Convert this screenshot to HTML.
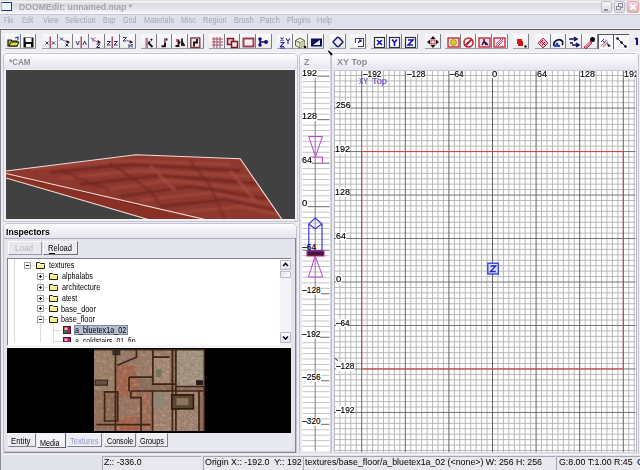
<!DOCTYPE html><html><head><meta charset="utf-8"><style>html,body{margin:0;padding:0;}body{width:640px;height:470px;overflow:hidden;position:relative;background:#e6e6ee;font-family:"Liberation Sans", sans-serif;}div{box-sizing:border-box;}svg{display:block;}</style></head><body>
<div style="position:absolute;left:0px;top:0px;width:640px;height:14px;background:linear-gradient(#d4d4da 0px,#f4f4f8 1.5px,#d8d8de 4px,#e2e2e8 8px,#f2f2f8 13px,#ffffff 14px);"></div>
<div style="position:absolute;left:1.3px;top:2px;width:10.7px;height:9px;background:#eef4fc;border:1px solid #a8b8d0;border-top:1.6px solid #1c3c78;border-bottom:1.2px solid #283c68;border-right:1.2px solid #303c60;"></div>
<div style="position:absolute;left:18.74px;top:2.46px;font-size:9.7px;line-height:9.7px;color:#a4a4ac;font-weight:bold;white-space:pre;transform:scaleX(0.8944);transform-origin:0 0;">DOOMEdit: unnamed.map *</div>
<div style="position:absolute;left:601px;top:1px;width:11px;height:12px;background:linear-gradient(#f4f4f8,#d8d8e2);border:1px solid #c0c0cc;border-radius:2px;"></div>
<div style="position:absolute;left:604px;top:9px;width:4px;height:2px;background:#9090a0;"></div>
<div style="position:absolute;left:614px;top:1px;width:11px;height:12px;background:linear-gradient(#f4f4f8,#d8d8e2);border:1px solid #c0c0cc;border-radius:2px;"></div>
<div style="position:absolute;left:618px;top:3px;width:5px;height:4.5px;border:1px solid #8a8a9a;border-top-width:1.5px;"></div>
<div style="position:absolute;left:616px;top:5.5px;width:5px;height:4.5px;background:#eeeef4;border:1px solid #8a8a9a;border-top-width:1.5px;"></div>
<div style="position:absolute;left:627px;top:1px;width:12px;height:12px;background:linear-gradient(#f4d4d8,#e0b0b8);border:1px solid #d8b0b8;border-radius:2px;"></div>
<svg style="position:absolute;left:627px;top:1px" width="12" height="12"><path d="M3.5 3.5L8.5 8.5M8.5 3.5L3.5 8.5" stroke="#fff" stroke-width="2"/></svg>
<div style="position:absolute;left:0px;top:14px;width:640px;height:1px;background:#c8c8d2;"></div>
<div style="position:absolute;left:0px;top:15px;width:640px;height:13px;background:#dfe0ec;"></div>
<div style="position:absolute;left:0px;top:28px;width:640px;height:1px;background:#eeeef4;"></div>
<div style="position:absolute;left:3.52px;top:16.20px;font-size:8.8px;line-height:8.8px;color:#a4a4b0;font-weight:normal;white-space:pre;transform:scaleX(0.6864);transform-origin:0 0;">File</div>
<div style="position:absolute;left:22.09px;top:16.20px;font-size:8.8px;line-height:8.8px;color:#a4a4b0;font-weight:normal;white-space:pre;transform:scaleX(0.7206);transform-origin:0 0;">Edit</div>
<div style="position:absolute;left:42.50px;top:16.20px;font-size:8.8px;line-height:8.8px;color:#a4a4b0;font-weight:normal;white-space:pre;transform:scaleX(0.8192);transform-origin:0 0;">View</div>
<div style="position:absolute;left:64.66px;top:16.20px;font-size:8.8px;line-height:8.8px;color:#a4a4b0;font-weight:normal;white-space:pre;transform:scaleX(0.8501);transform-origin:0 0;">Selection</div>
<div style="position:absolute;left:103.14px;top:16.20px;font-size:8.8px;line-height:8.8px;color:#a4a4b0;font-weight:normal;white-space:pre;transform:scaleX(0.8026);transform-origin:0 0;">Bsp</div>
<div style="position:absolute;left:123.34px;top:16.20px;font-size:8.8px;line-height:8.8px;color:#a4a4b0;font-weight:normal;white-space:pre;transform:scaleX(0.8108);transform-origin:0 0;">Grid</div>
<div style="position:absolute;left:144.11px;top:16.20px;font-size:8.8px;line-height:8.8px;color:#a4a4b0;font-weight:normal;white-space:pre;transform:scaleX(0.8364);transform-origin:0 0;">Materials</div>
<div style="position:absolute;left:181.03px;top:16.20px;font-size:8.8px;line-height:8.8px;color:#a4a4b0;font-weight:normal;white-space:pre;transform:scaleX(0.8159);transform-origin:0 0;">Misc</div>
<div style="position:absolute;left:202.80px;top:16.20px;font-size:8.8px;line-height:8.8px;color:#a4a4b0;font-weight:normal;white-space:pre;transform:scaleX(0.8476);transform-origin:0 0;">Region</div>
<div style="position:absolute;left:233.80px;top:16.20px;font-size:8.8px;line-height:8.8px;color:#a4a4b0;font-weight:normal;white-space:pre;transform:scaleX(0.8557);transform-origin:0 0;">Brush</div>
<div style="position:absolute;left:260.38px;top:16.20px;font-size:8.8px;line-height:8.8px;color:#a4a4b0;font-weight:normal;white-space:pre;transform:scaleX(0.8799);transform-origin:0 0;">Patch</div>
<div style="position:absolute;left:286.92px;top:16.20px;font-size:8.8px;line-height:8.8px;color:#a4a4b0;font-weight:normal;white-space:pre;transform:scaleX(0.8186);transform-origin:0 0;">Plugins</div>
<div style="position:absolute;left:317.42px;top:16.20px;font-size:8.8px;line-height:8.8px;color:#a4a4b0;font-weight:normal;white-space:pre;transform:scaleX(0.8222);transform-origin:0 0;">Help</div>
<div style="position:absolute;left:0px;top:29px;width:640px;height:1px;background:#585c62;"></div>
<div style="position:absolute;left:0px;top:30px;width:640px;height:23px;background:#eeeef2;"></div>
<div style="position:absolute;left:0px;top:52px;width:640px;height:1px;background:#f8f8fc;"></div>
<div style="position:absolute;left:5.00px;top:33.5px;width:15.6px;height:15.8px;background:linear-gradient(#fafafc,#ececf0);border-right:1px solid #7c7c84;border-bottom:1px solid #a0a0a8;"></div>
<svg style="position:absolute;left:4.50px;top:33.5px;filter:blur(0.25px)" width="16" height="16" viewBox="0 0 16 16"><path d="M3 6h3l1 1h5v5H3z" fill="#c8c820" stroke="#101010" stroke-width="1.2"/><path d="M4 12l2-4h8l-2 4z" fill="#e0e040" stroke="#101010" stroke-width="1"/><path d="M10 4l3-1v3" stroke="#3040b0" fill="none" stroke-width="1.2"/></svg>
<div style="position:absolute;left:20.65px;top:33.5px;width:15.6px;height:15.8px;background:linear-gradient(#fafafc,#ececf0);border-right:1px solid #7c7c84;border-bottom:1px solid #a0a0a8;"></div>
<svg style="position:absolute;left:20.15px;top:33.5px;filter:blur(0.25px)" width="16" height="16" viewBox="0 0 16 16"><rect x="3.5" y="3.5" width="10" height="10" fill="#101010"/><rect x="5.5" y="4" width="6" height="4" fill="#fff"/><rect x="6" y="10" width="5" height="3" fill="#fff"/></svg>
<div style="position:absolute;left:42.00px;top:33.5px;width:15.6px;height:15.8px;background:linear-gradient(#fafafc,#ececf0);border-right:1px solid #7c7c84;border-bottom:1px solid #a0a0a8;"></div>
<svg style="position:absolute;left:41.50px;top:33.5px;filter:blur(0.25px)" width="16" height="16" viewBox="0 0 16 16"><path d="M3.5 7.5l3 3M6.5 7.5l-3 3M10 7.5l3 3M13 7.5l-3 3" stroke="#303080" stroke-width="1"/><path d="M8.2 2.5V14" stroke="#a02838" stroke-width="1.2"/></svg>
<div style="position:absolute;left:57.65px;top:33.5px;width:15.6px;height:15.8px;background:linear-gradient(#fafafc,#ececf0);border-right:1px solid #7c7c84;border-bottom:1px solid #a0a0a8;"></div>
<svg style="position:absolute;left:57.15px;top:33.5px;filter:blur(0.25px)" width="16" height="16" viewBox="0 0 16 16"><path d="M3 3.5l3 3M6 3.5l-3 3M8.5 9.5l3 3M11.5 9.5l-3 3" stroke="#303080" stroke-width="1"/><path d="M6 6l4 2" stroke="#c03848" stroke-width="0.9"/><path d="M9.5 6l3.5 2.2-3.2 1.3z" fill="#101018"/></svg>
<div style="position:absolute;left:73.30px;top:33.5px;width:15.6px;height:15.8px;background:linear-gradient(#fafafc,#ececf0);border-right:1px solid #7c7c84;border-bottom:1px solid #a0a0a8;"></div>
<svg style="position:absolute;left:72.80px;top:33.5px;filter:blur(0.25px)" width="16" height="16" viewBox="0 0 16 16"><path d="M3 7l1.7 4 1.7-4M10 11l1.7-4 1.7 4" stroke="#303080" stroke-width="1" fill="none"/><path d="M8.2 2.5V14" stroke="#a02838" stroke-width="1.2"/></svg>
<div style="position:absolute;left:88.95px;top:33.5px;width:15.6px;height:15.8px;background:linear-gradient(#fafafc,#ececf0);border-right:1px solid #7c7c84;border-bottom:1px solid #a0a0a8;"></div>
<svg style="position:absolute;left:88.45px;top:33.5px;filter:blur(0.25px)" width="16" height="16" viewBox="0 0 16 16"><path d="M3 3.5l2 2 2-2M5 5.5v2M8.5 10h3.5l-3.5 3.5h3.5" stroke="#303080" stroke-width="1" fill="none"/><path d="M9.5 6l3.5 2.2-3.2 1.3z" fill="#101018"/><path d="M6 6.5l4 1.5" stroke="#c03848" stroke-width="0.9"/></svg>
<div style="position:absolute;left:104.60px;top:33.5px;width:15.6px;height:15.8px;background:linear-gradient(#fafafc,#ececf0);border-right:1px solid #7c7c84;border-bottom:1px solid #a0a0a8;"></div>
<svg style="position:absolute;left:104.10px;top:33.5px;filter:blur(0.25px)" width="16" height="16" viewBox="0 0 16 16"><path d="M3 7.5h3.5l-3.5 3.5h3.5M10 7.5h3.5l-3.5 3.5h3.5" stroke="#303080" stroke-width="1" fill="none"/><path d="M8.2 2.5V14" stroke="#a02838" stroke-width="1.2"/></svg>
<div style="position:absolute;left:120.25px;top:33.5px;width:15.6px;height:15.8px;background:linear-gradient(#fafafc,#ececf0);border-right:1px solid #7c7c84;border-bottom:1px solid #a0a0a8;"></div>
<svg style="position:absolute;left:119.75px;top:33.5px;filter:blur(0.25px)" width="16" height="16" viewBox="0 0 16 16"><path d="M3 3.5h3.5l-3.5 3.5h3.5M9 10v3.5l3-3.5v3.5" stroke="#303080" stroke-width="1" fill="none"/><path d="M9.5 6l3.5 2.2-3.2 1.3z" fill="#101018"/><path d="M6.5 6l3.5 2" stroke="#c03848" stroke-width="0.9"/></svg>
<div style="position:absolute;left:141.00px;top:33.5px;width:15.6px;height:15.8px;background:linear-gradient(#fafafc,#ececf0);border-right:1px solid #7c7c84;border-bottom:1px solid #a0a0a8;"></div>
<svg style="position:absolute;left:140.50px;top:33.5px;filter:blur(0.25px)" width="16" height="16" viewBox="0 0 16 16"><rect x="4.5" y="4" width="2.5" height="10" fill="#b87888"/><path d="M7.5 9L11 5M7.5 9L11.5 13" stroke="#181018" stroke-width="1.8"/><rect x="8.5" y="6" width="1.5" height="1.5" fill="#fff"/></svg>
<div style="position:absolute;left:156.65px;top:33.5px;width:15.6px;height:15.8px;background:linear-gradient(#fafafc,#ececf0);border-right:1px solid #7c7c84;border-bottom:1px solid #a0a0a8;"></div>
<svg style="position:absolute;left:156.15px;top:33.5px;filter:blur(0.25px)" width="16" height="16" viewBox="0 0 16 16"><path d="M11.5 5.5H9V12.2H5.5" stroke="#201018" stroke-width="2" fill="none"/><rect x="8" y="5" width="2" height="4" fill="#b06070"/></svg>
<div style="position:absolute;left:172.30px;top:33.5px;width:15.6px;height:15.8px;background:linear-gradient(#fafafc,#ececf0);border-right:1px solid #7c7c84;border-bottom:1px solid #a0a0a8;"></div>
<svg style="position:absolute;left:171.80px;top:33.5px;filter:blur(0.25px)" width="16" height="16" viewBox="0 0 16 16"><path d="M6.5 5.5V12H3.5M7 8.5h1.5M10 4.5V12M10 8L12.5 12" stroke="#201018" stroke-width="1.8" fill="none"/><rect x="4" y="5" width="2" height="3" fill="#b06070"/></svg>
<div style="position:absolute;left:187.95px;top:33.5px;width:15.6px;height:15.8px;background:linear-gradient(#fafafc,#ececf0);border-right:1px solid #7c7c84;border-bottom:1px solid #a0a0a8;"></div>
<svg style="position:absolute;left:187.45px;top:33.5px;filter:blur(0.25px)" width="16" height="16" viewBox="0 0 16 16"><rect x="3.8" y="4" width="9" height="9.5" fill="#f4e0e4" stroke="#704050" stroke-width="1.4"/><path d="M7 12.5V8.5H10V5" stroke="#101010" stroke-width="1.8" fill="none"/></svg>
<div style="position:absolute;left:209.00px;top:33.5px;width:15.6px;height:15.8px;background:linear-gradient(#fafafc,#ececf0);border-right:1px solid #7c7c84;border-bottom:1px solid #a0a0a8;"></div>
<svg style="position:absolute;left:208.50px;top:33.5px;filter:blur(0.25px)" width="16" height="16" viewBox="0 0 16 16"><path d="M3 5h11M3 8h11M3 11h11M5 3v11M8 3v11M11 3v11" stroke="#a05060" stroke-width="1"/></svg>
<div style="position:absolute;left:224.65px;top:33.5px;width:15.6px;height:15.8px;background:linear-gradient(#fafafc,#ececf0);border-right:1px solid #7c7c84;border-bottom:1px solid #a0a0a8;"></div>
<svg style="position:absolute;left:224.15px;top:33.5px;filter:blur(0.25px)" width="16" height="16" viewBox="0 0 16 16"><rect x="3.5" y="4.5" width="6" height="6" fill="#f0c0c8" stroke="#801828" stroke-width="1.5"/><rect x="7.5" y="7.5" width="6" height="6" fill="#f0e0e8" stroke="#801828" stroke-width="1.5"/></svg>
<div style="position:absolute;left:240.30px;top:33.5px;width:15.6px;height:15.8px;background:linear-gradient(#fafafc,#ececf0);border-right:1px solid #7c7c84;border-bottom:1px solid #a0a0a8;"></div>
<svg style="position:absolute;left:239.80px;top:33.5px;filter:blur(0.25px)" width="16" height="16" viewBox="0 0 16 16"><rect x="3.5" y="4.5" width="10" height="8" fill="#f8f0f0" stroke="#a04050" stroke-width="2"/></svg>
<div style="position:absolute;left:255.95px;top:33.5px;width:15.6px;height:15.8px;background:linear-gradient(#fafafc,#ececf0);border-right:1px solid #7c7c84;border-bottom:1px solid #a0a0a8;"></div>
<svg style="position:absolute;left:255.45px;top:33.5px;filter:blur(0.25px)" width="16" height="16" viewBox="0 0 16 16"><path d="M5 5L5 11M5 8l6 0" stroke="#101080" stroke-width="1.5"/><circle cx="5" cy="5" r="1.8" fill="#101080"/><circle cx="5" cy="11" r="1.8" fill="#101080"/><circle cx="11" cy="8" r="2" fill="#101080"/></svg>
<div style="position:absolute;left:277.00px;top:33.5px;width:15.6px;height:15.8px;background:linear-gradient(#fafafc,#ececf0);border-right:1px solid #7c7c84;border-bottom:1px solid #a0a0a8;"></div>
<svg style="position:absolute;left:276.50px;top:33.5px;filter:blur(0.25px)" width="16" height="16" viewBox="0 0 16 16"><path d="M3.5 3.5l3 3.5M6.5 3.5l-3 3.5M9 4.5l2 2.5 2-2.5M11 7v3M3.5 8.5h3.5l-3.5 4h3.5" stroke="#2828a0" stroke-width="1.1" fill="none"/><path d="M3 14h5" stroke="#2828a0" stroke-width="1"/></svg>
<div style="position:absolute;left:292.65px;top:33.5px;width:15.6px;height:15.8px;background:linear-gradient(#fafafc,#ececf0);border-right:1px solid #7c7c84;border-bottom:1px solid #a0a0a8;"></div>
<svg style="position:absolute;left:292.15px;top:33.5px;filter:blur(0.25px)" width="16" height="16" viewBox="0 0 16 16"><path d="M3.5 6.5L8 4l4.5 2.5v5L8 14l-4.5-2.5z" fill="#e8ecd0" stroke="#5a5a40" stroke-width="1"/><path d="M3.5 6.5L8 9l4.5-2.5M8 9v5" stroke="#5a5a40" stroke-width="0.9" fill="none"/><path d="M8 9l4.5-2.5v5L8 14z" fill="#c8d0a8"/><circle cx="13" cy="13" r="1.3" fill="#101010"/></svg>
<div style="position:absolute;left:308.30px;top:33.5px;width:15.6px;height:15.8px;background:linear-gradient(#fafafc,#ececf0);border-right:1px solid #7c7c84;border-bottom:1px solid #a0a0a8;"></div>
<svg style="position:absolute;left:307.80px;top:33.5px;filter:blur(0.25px)" width="16" height="16" viewBox="0 0 16 16"><rect x="3" y="4.5" width="11" height="8" fill="#0a1060"/><path d="M5 11L12 6V11z" fill="#f0f0ff"/></svg>
<div style="position:absolute;left:330.00px;top:33.5px;width:15.6px;height:15.8px;background:linear-gradient(#fafafc,#ececf0);border-right:1px solid #7c7c84;border-bottom:1px solid #a0a0a8;"></div>
<svg style="position:absolute;left:329.50px;top:33.5px;filter:blur(0.25px)" width="16" height="16" viewBox="0 0 16 16"><path d="M8 3.2Q9 3.2 10.5 5.2L12.6 7.4Q13.2 8 12.6 8.6L10.5 10.8Q9 12.8 8 12.8Q7 12.8 5.5 10.8L3.4 8.6Q2.8 8 3.4 7.4L5.5 5.2Q7 3.2 8 3.2Z" fill="#e8e8f8" stroke="#202068" stroke-width="1.5"/></svg>
<div style="position:absolute;left:350.00px;top:33.5px;width:15.6px;height:15.8px;background:linear-gradient(#fafafc,#ececf0);border-right:1px solid #7c7c84;border-bottom:1px solid #a0a0a8;"></div>
<svg style="position:absolute;left:349.50px;top:33.5px;filter:blur(0.25px)" width="16" height="16" viewBox="0 0 16 16"><rect x="5.5" y="4.5" width="8" height="8" fill="#fff" stroke="#404048" stroke-width="1"/><rect x="4" y="9" width="4" height="4" fill="#fff"/><path d="M8 9l3-3M9 6h2v2" stroke="#2020a0" stroke-width="1.2" fill="none"/></svg>
<div style="position:absolute;left:371.00px;top:33.5px;width:15.6px;height:15.8px;background:linear-gradient(#fafafc,#ececf0);border-right:1px solid #7c7c84;border-bottom:1px solid #a0a0a8;"></div>
<svg style="position:absolute;left:370.50px;top:33.5px;filter:blur(0.25px)" width="16" height="16" viewBox="0 0 16 16"><rect x="3.5" y="3.5" width="10" height="10" fill="#fff" stroke="#303040" stroke-width="1.2"/><path d="M6 6l5 5M11 6l-5 5" stroke="#1010c0" stroke-width="1.6"/></svg>
<div style="position:absolute;left:386.65px;top:33.5px;width:15.6px;height:15.8px;background:linear-gradient(#fafafc,#ececf0);border-right:1px solid #7c7c84;border-bottom:1px solid #a0a0a8;"></div>
<svg style="position:absolute;left:386.15px;top:33.5px;filter:blur(0.25px)" width="16" height="16" viewBox="0 0 16 16"><rect x="3.5" y="3.5" width="10" height="10" fill="#fff" stroke="#303040" stroke-width="1.2"/><path d="M6 5.5l2.5 3 2.5-3M8.5 8.5v3.5" stroke="#1010c0" stroke-width="1.6" fill="none"/></svg>
<div style="position:absolute;left:402.30px;top:33.5px;width:15.6px;height:15.8px;background:linear-gradient(#fafafc,#ececf0);border-right:1px solid #7c7c84;border-bottom:1px solid #a0a0a8;"></div>
<svg style="position:absolute;left:401.80px;top:33.5px;filter:blur(0.25px)" width="16" height="16" viewBox="0 0 16 16"><rect x="3.5" y="3.5" width="10" height="10" fill="#fff" stroke="#303040" stroke-width="1.2"/><path d="M6 6h5l-5 5h5" stroke="#1010c0" stroke-width="1.5" fill="none"/></svg>
<div style="position:absolute;left:425.00px;top:33.5px;width:15.6px;height:15.8px;background:linear-gradient(#fafafc,#ececf0);border-right:1px solid #7c7c84;border-bottom:1px solid #a0a0a8;"></div>
<svg style="position:absolute;left:424.50px;top:33.5px;filter:blur(0.25px)" width="16" height="16" viewBox="0 0 16 16"><path d="M8 2l2.5 3h-5zM8 14l2.5-3h-5zM2 8l3-2.5v5zM14 8l-3-2.5v5z" fill="#200810"/><rect x="6" y="6" width="4" height="4" fill="#f8f0f0" stroke="#c03040" stroke-width="1"/></svg>
<div style="position:absolute;left:445.00px;top:33.5px;width:15.6px;height:15.8px;background:linear-gradient(#fafafc,#ececf0);border-right:1px solid #7c7c84;border-bottom:1px solid #a0a0a8;"></div>
<svg style="position:absolute;left:444.50px;top:33.5px;filter:blur(0.25px)" width="16" height="16" viewBox="0 0 16 16"><rect x="3" y="4" width="11" height="9" fill="#f8e0e0" stroke="#c02030" stroke-width="1.3"/><circle cx="8.5" cy="8.5" r="3" fill="#d8d020" stroke="#807010" stroke-width="0.6"/></svg>
<div style="position:absolute;left:460.65px;top:33.5px;width:15.6px;height:15.8px;background:linear-gradient(#fafafc,#ececf0);border-right:1px solid #7c7c84;border-bottom:1px solid #a0a0a8;"></div>
<svg style="position:absolute;left:460.15px;top:33.5px;filter:blur(0.25px)" width="16" height="16" viewBox="0 0 16 16"><circle cx="8.5" cy="8.5" r="4.5" fill="#f8f0f0" stroke="#c02030" stroke-width="1.5"/><path d="M5 12l7-7" stroke="#c02030" stroke-width="1.8"/><path d="M7 8l2 2" stroke="#403040" stroke-width="1"/></svg>
<div style="position:absolute;left:476.30px;top:33.5px;width:15.6px;height:15.8px;background:linear-gradient(#fafafc,#ececf0);border-right:1px solid #7c7c84;border-bottom:1px solid #a0a0a8;"></div>
<svg style="position:absolute;left:475.80px;top:33.5px;filter:blur(0.25px)" width="16" height="16" viewBox="0 0 16 16"><rect x="3" y="4" width="11" height="9" fill="#f8d8e0" stroke="#c02030" stroke-width="1.3"/><path d="M6 11l2-4 2 4M8 7V5M9 8l3 3" stroke="#201040" stroke-width="1.4" fill="none"/></svg>
<div style="position:absolute;left:491.95px;top:33.5px;width:15.6px;height:15.8px;background:linear-gradient(#fafafc,#ececf0);border-right:1px solid #7c7c84;border-bottom:1px solid #a0a0a8;"></div>
<svg style="position:absolute;left:491.45px;top:33.5px;filter:blur(0.25px)" width="16" height="16" viewBox="0 0 16 16"><rect x="3" y="4" width="11" height="9" fill="#f8e8f0" stroke="#c02030" stroke-width="1.3"/><path d="M5 12l7-7M7 12l5-5M5 10l5-5" stroke="#b05090" stroke-width="1" fill="none"/></svg>
<div style="position:absolute;left:513.00px;top:33.5px;width:15.6px;height:15.8px;background:linear-gradient(#fafafc,#ececf0);border-right:1px solid #7c7c84;border-bottom:1px solid #a0a0a8;"></div>
<svg style="position:absolute;left:512.50px;top:33.5px;filter:blur(0.25px)" width="16" height="16" viewBox="0 0 16 16"><path d="M4 5h5v5H4z" fill="#f01010"/><path d="M5 7h5v5H5z" fill="#d01010"/><circle cx="12.5" cy="12.5" r="1.2" fill="#101010"/></svg>
<div style="position:absolute;left:535.00px;top:33.5px;width:15.6px;height:15.8px;background:linear-gradient(#fafafc,#ececf0);border-right:1px solid #7c7c84;border-bottom:1px solid #a0a0a8;"></div>
<svg style="position:absolute;left:534.50px;top:33.5px;filter:blur(0.25px)" width="16" height="16" viewBox="0 0 16 16"><path d="M3 9l5-5 5 5-5 5z" fill="#f0b0c0" stroke="#c03050" stroke-width="1"/><path d="M5 9l3-3M7 11l3-3M6 7l5 5" stroke="#a01030" stroke-width="1"/></svg>
<div style="position:absolute;left:550.65px;top:33.5px;width:15.6px;height:15.8px;background:linear-gradient(#fafafc,#ececf0);border-right:1px solid #7c7c84;border-bottom:1px solid #a0a0a8;"></div>
<svg style="position:absolute;left:550.15px;top:33.5px;filter:blur(0.25px)" width="16" height="16" viewBox="0 0 16 16"><path d="M4 12a5 5 0 0 1 9-4" stroke="#181830" stroke-width="1.8" fill="none"/><path d="M10 6a3 3 0 0 1 2 5" stroke="#181830" stroke-width="1.5" fill="none"/><path d="M5 11l2-3 2 3z" fill="#2040c0"/><rect x="4" y="11" width="6" height="2" fill="#3050c0"/></svg>
<div style="position:absolute;left:566.30px;top:33.5px;width:15.6px;height:15.8px;background:linear-gradient(#fafafc,#ececf0);border-right:1px solid #7c7c84;border-bottom:1px solid #a0a0a8;"></div>
<svg style="position:absolute;left:565.80px;top:33.5px;filter:blur(0.25px)" width="16" height="16" viewBox="0 0 16 16"><path d="M4 5h6M8 3l3 2-3 2M4 9h3M6 11h6M10 9l3 2-3 2" stroke="#101060" stroke-width="1.5" fill="none"/><circle cx="4" cy="5" r="1" fill="#2030a0"/></svg>
<div style="position:absolute;left:581.95px;top:33.5px;width:15.6px;height:15.8px;background:linear-gradient(#fafafc,#ececf0);border-right:1px solid #7c7c84;border-bottom:1px solid #a0a0a8;"></div>
<svg style="position:absolute;left:581.45px;top:33.5px;filter:blur(0.25px)" width="16" height="16" viewBox="0 0 16 16"><path d="M3 13l6-6 2 2-6 6z" fill="#e08090" stroke="#c03050" stroke-width="1"/><path d="M4 12l5-5" stroke="#fff" stroke-width="0.6"/><circle cx="11.5" cy="5.5" r="2.5" fill="#080810"/></svg>
<div style="position:absolute;left:597.60px;top:33.5px;width:15.6px;height:15.8px;background:#fafafc;border-left:1.5px solid #585c60;border-top:1.5px solid #585c60;"></div>
<svg style="position:absolute;left:597.10px;top:33.5px;filter:blur(0.25px)" width="16" height="16" viewBox="0 0 16 16"><path d="M4 12l6-6M6 13l5-5" stroke="#d08090" stroke-width="1.2"/><path d="M5 6l3 3M4 8l3-3" stroke="#2030a0" stroke-width="1"/><path d="M10 9l4 3-3 1z" fill="#101010"/></svg>
<div style="position:absolute;left:613.25px;top:33.5px;width:15.6px;height:15.8px;background:#fafafc;border-left:1.5px solid #585c60;border-top:1.5px solid #585c60;"></div>
<svg style="position:absolute;left:612.75px;top:33.5px;filter:blur(0.25px)" width="16" height="16" viewBox="0 0 16 16"><path d="M4 4l9 9" stroke="#202040" stroke-width="1"/><circle cx="4.5" cy="4.5" r="1.3" fill="#101020"/><circle cx="8.5" cy="8.5" r="1.3" fill="#101020"/><circle cx="12.5" cy="12.5" r="1.3" fill="#101020"/></svg>
<svg style="position:absolute;left:632px;top:33px" width="8" height="16"><path d="M5 5v7" stroke="#101080" stroke-width="2"/><path d="M3 6l2-1" stroke="#101080" stroke-width="1.5"/></svg>
<div style="position:absolute;left:0px;top:30px;width:1px;height:423px;background:#8c8c94;"></div>
<div style="position:absolute;left:1px;top:53px;width:639px;height:400px;background:#ececf2;"></div>
<div style="position:absolute;left:3px;top:53px;width:295px;height:169px;background:#f0f0f6;border:1px solid #c4c4d0;border-radius:5px 5px 0 0;"></div>
<div style="position:absolute;left:4px;top:54px;width:293px;height:15px;background:linear-gradient(#ffffff,#e4e4ee);border-radius:4px 4px 0 0;"></div>
<div style="position:absolute;left:9.00px;top:57.47px;font-size:9.6px;line-height:9.6px;color:#8e8e96;font-weight:bold;white-space:pre;transform:scaleX(0.8397);transform-origin:0 0;">*CAM</div>
<div style="position:absolute;left:6px;top:69.5px;width:289px;height:149.2px;background:#414141;"></div>
<svg style="position:absolute;left:6px;top:69.5px" width="289" height="149.2" viewBox="6 69.5 289 149.2">
<defs><clipPath id="camclip"><rect x="6" y="69.5" width="289" height="150"/></clipPath>
<clipPath id="topclip"><path d="M6 170.5L136 154.3L240.2 158.3L282.4 219.5L207.4 219.5L6 173Z"/></clipPath>
<filter id="fb" x="-10%" y="-10%" width="120%" height="120%"><feGaussianBlur stdDeviation="1.3"/></filter></defs>
<g clip-path="url(#camclip)">
<path d="M6 170.5L136 154.3L240.2 158.3L282.4 219.5L207.4 219.5L6 173Z" fill="#8e3830"/>
<g clip-path="url(#topclip)"><g filter="url(#fb)" fill="none">
<path d="M30 168L120 160L230 164M60 178L140 170L250 176M100 190L170 180L262 190M140 200L210 192L270 204M180 212L240 206L280 214" stroke="#a2463a" stroke-width="2.5"/>
<path d="M50 172L130 164L240 170M80 184L160 175L258 183M120 196L190 186L266 198M160 206L225 199L276 210" stroke="#6e241c" stroke-width="1.8"/>
<path d="M110 162L150 190L170 219M190 160L210 185L225 219M60 170L110 190" stroke="#702820" stroke-width="1.6"/>
<path d="M150 165L175 190M230 170L255 200" stroke="#a84c40" stroke-width="2"/>
</g></g>
<path d="M6 173L207.4 219.5L150 219.5L6 177.5Z" fill="#8a3026"/>
<path d="M30 179L45 183M70 188L95 194M120 200L140 205" stroke="#6a2018" stroke-width="2" opacity="0.7"/>
<path d="M6 170.5L136 154.3L240.2 158.3L282.4 219.5" stroke="#f2dcd4" stroke-width="1.1" fill="none"/>
<path d="M6 173L207.4 219.5M6 177.5L150 219.5" stroke="#f2dcd4" stroke-width="1.1" fill="none"/>
</g></svg>
<div style="position:absolute;left:3px;top:222.5px;width:294px;height:231px;background:#e4e4ec;border:1px solid #c4c4d0;border-radius:5px 5px 0 0;"></div>
<div style="position:absolute;left:4px;top:223.5px;width:292px;height:14.5px;background:linear-gradient(#ffffff,#e2e2ec);border-radius:4px 4px 0 0;"></div>
<div style="position:absolute;left:4px;top:237.8px;width:291px;height:1px;background:#b0b0ba;"></div>
<div style="position:absolute;left:6.44px;top:226.81px;font-size:9.4px;line-height:9.4px;color:#000;font-weight:bold;white-space:pre;transform:scaleX(0.9232);transform-origin:0 0;">Inspectors</div>
<div style="position:absolute;left:7.7px;top:241px;width:34.5px;height:14px;background:#e8e8ee;border-right:1px solid #9c9ca4;border-bottom:1px solid #9c9ca4;border-top:1px solid #fafafa;border-left:1px solid #fafafa;"></div>
<div style="position:absolute;left:15.35px;top:243.90px;font-size:8.8px;line-height:8.8px;color:#b8b8c0;font-weight:normal;white-space:pre;transform:scaleX(0.9265);transform-origin:0 0;">Load</div>
<div style="position:absolute;left:42.9px;top:241px;width:35px;height:14px;background:#ececf2;border-right:1px solid #6c6c74;border-bottom:1px solid #6c6c74;border-top:1px solid #fafafa;border-left:1px solid #fafafa;"></div>
<div style="position:absolute;left:48.39px;top:243.90px;font-size:8.8px;line-height:8.8px;color:#000;font-weight:normal;white-space:pre;transform:scaleX(0.8626);transform-origin:0 0;">Reload</div>
<div style="position:absolute;left:49px;top:252.6px;width:5.5px;height:0.9px;background:#000;"></div>
<div style="position:absolute;left:7px;top:257.5px;width:284px;height:88px;background:#ffffff;border-top:1.4px solid #808088;border-left:1.2px solid #808088;"></div>
<div style="position:absolute;left:8px;top:258.5px;width:272px;height:83px;overflow:hidden;">
<svg style="position:absolute;left:6px;top:0.0px" width="1" height="87.5"><path d="M0 0V86.5" stroke="#b8b8b8" stroke-width="1" stroke-dasharray="1 1" transform="translate(0.5,0.5)"/></svg>
<svg style="position:absolute;left:32px;top:10.5px" width="1" height="77"><path d="M0 0V76" stroke="#b8b8b8" stroke-width="1" stroke-dasharray="1 1" transform="translate(0.5,0.5)"/></svg>
<svg style="position:absolute;left:44.5px;top:64.5px" width="1.0" height="23"><path d="M0 0V22" stroke="#b8b8b8" stroke-width="1" stroke-dasharray="1 1" transform="translate(0.5,0.5)"/></svg>
<svg style="position:absolute;left:16px;top:3.5px" width="7" height="7"><rect x="0.5" y="0.5" width="6" height="6" fill="#fff" stroke="#a0a0a8" stroke-width="1"/><path d="M2 3.5h3" stroke="#101010" stroke-width="1"/></svg>
<svg style="position:absolute;left:23px;top:6.5px" width="5" height="1.0"><path d="M0 0H4" stroke="#b8b8b8" stroke-width="1" stroke-dasharray="1 1" transform="translate(0.5,0.5)"/></svg>
<svg style="position:absolute;left:27.5px;top:2.5px" width="10" height="8"><path d="M0.5 1.5h3l1 1h4v5h-8z" fill="#f4f080" stroke="#202010" stroke-width="1"/><path d="M1.5 3.5h7" stroke="#fffff0" stroke-width="1"/></svg>
<div style="position:absolute;left:40.79px;top:2.66px;font-size:8.4px;line-height:8.4px;color:#000;font-weight:normal;white-space:pre;transform:scaleX(0.8491);transform-origin:0 0;">textures</div>
<svg style="position:absolute;left:29px;top:14.350000000000023px" width="7" height="7"><rect x="0.5" y="0.5" width="6" height="6" fill="#fff" stroke="#a0a0a8" stroke-width="1"/><path d="M2 3.5h3M3.5 2v3" stroke="#101010" stroke-width="1"/></svg>
<svg style="position:absolute;left:36px;top:17.350000000000023px" width="5" height="1.0"><path d="M0 0H4" stroke="#b8b8b8" stroke-width="1" stroke-dasharray="1 1" transform="translate(0.5,0.5)"/></svg>
<svg style="position:absolute;left:40.5px;top:13.350000000000023px" width="10" height="8"><path d="M0.5 1.5h3l1 1h4v5h-8z" fill="#f4f080" stroke="#202010" stroke-width="1"/><path d="M1.5 3.5h7" stroke="#fffff0" stroke-width="1"/></svg>
<div style="position:absolute;left:53.51px;top:13.51px;font-size:8.4px;line-height:8.4px;color:#000;font-weight:normal;white-space:pre;transform:scaleX(0.8578);transform-origin:0 0;">alphalabs</div>
<svg style="position:absolute;left:29px;top:25.19999999999999px" width="7" height="7"><rect x="0.5" y="0.5" width="6" height="6" fill="#fff" stroke="#a0a0a8" stroke-width="1"/><path d="M2 3.5h3M3.5 2v3" stroke="#101010" stroke-width="1"/></svg>
<svg style="position:absolute;left:36px;top:28.19999999999999px" width="5" height="1.0"><path d="M0 0H4" stroke="#b8b8b8" stroke-width="1" stroke-dasharray="1 1" transform="translate(0.5,0.5)"/></svg>
<svg style="position:absolute;left:40.5px;top:24.19999999999999px" width="10" height="8"><path d="M0.5 1.5h3l1 1h4v5h-8z" fill="#f4f080" stroke="#202010" stroke-width="1"/><path d="M1.5 3.5h7" stroke="#fffff0" stroke-width="1"/></svg>
<div style="position:absolute;left:53.51px;top:24.36px;font-size:8.4px;line-height:8.4px;color:#000;font-weight:normal;white-space:pre;transform:scaleX(0.8746);transform-origin:0 0;">architecture</div>
<svg style="position:absolute;left:29px;top:36.05000000000001px" width="7" height="7"><rect x="0.5" y="0.5" width="6" height="6" fill="#fff" stroke="#a0a0a8" stroke-width="1"/><path d="M2 3.5h3M3.5 2v3" stroke="#101010" stroke-width="1"/></svg>
<svg style="position:absolute;left:36px;top:39.05000000000001px" width="5" height="1.0"><path d="M0 0H4" stroke="#b8b8b8" stroke-width="1" stroke-dasharray="1 1" transform="translate(0.5,0.5)"/></svg>
<svg style="position:absolute;left:40.5px;top:35.05000000000001px" width="10" height="8"><path d="M0.5 1.5h3l1 1h4v5h-8z" fill="#f4f080" stroke="#202010" stroke-width="1"/><path d="M1.5 3.5h7" stroke="#fffff0" stroke-width="1"/></svg>
<div style="position:absolute;left:53.52px;top:35.21px;font-size:8.4px;line-height:8.4px;color:#000;font-weight:normal;white-space:pre;transform:scaleX(0.8403);transform-origin:0 0;">atest</div>
<svg style="position:absolute;left:29px;top:46.89999999999998px" width="7" height="7"><rect x="0.5" y="0.5" width="6" height="6" fill="#fff" stroke="#a0a0a8" stroke-width="1"/><path d="M2 3.5h3M3.5 2v3" stroke="#101010" stroke-width="1"/></svg>
<svg style="position:absolute;left:36px;top:49.89999999999998px" width="5" height="1.0"><path d="M0 0H4" stroke="#b8b8b8" stroke-width="1" stroke-dasharray="1 1" transform="translate(0.5,0.5)"/></svg>
<svg style="position:absolute;left:40.5px;top:45.89999999999998px" width="10" height="8"><path d="M0.5 1.5h3l1 1h4v5h-8z" fill="#f4f080" stroke="#202010" stroke-width="1"/><path d="M1.5 3.5h7" stroke="#fffff0" stroke-width="1"/></svg>
<div style="position:absolute;left:53.36px;top:46.06px;font-size:8.4px;line-height:8.4px;color:#000;font-weight:normal;white-space:pre;transform:scaleX(0.8823);transform-origin:0 0;">base_door</div>
<svg style="position:absolute;left:29px;top:57.75px" width="7" height="7"><rect x="0.5" y="0.5" width="6" height="6" fill="#fff" stroke="#a0a0a8" stroke-width="1"/><path d="M2 3.5h3" stroke="#101010" stroke-width="1"/></svg>
<svg style="position:absolute;left:36px;top:60.75px" width="5" height="1.0"><path d="M0 0H4" stroke="#b8b8b8" stroke-width="1" stroke-dasharray="1 1" transform="translate(0.5,0.5)"/></svg>
<svg style="position:absolute;left:40.5px;top:56.75px" width="10" height="8"><path d="M0.5 1.5h3l1 1h4v5h-8z" fill="#f4f080" stroke="#202010" stroke-width="1"/><path d="M1.5 3.5h7" stroke="#fffff0" stroke-width="1"/></svg>
<div style="position:absolute;left:53.36px;top:56.91px;font-size:8.4px;line-height:8.4px;color:#000;font-weight:normal;white-space:pre;transform:scaleX(0.8653);transform-origin:0 0;">base_floor</div>
<svg style="position:absolute;left:45px;top:71.60000000000002px" width="10" height="1.0"><path d="M0 0H9" stroke="#b8b8b8" stroke-width="1" stroke-dasharray="1 1" transform="translate(0.5,0.5)"/></svg>
<div style="position:absolute;left:65.5px;top:66.10000000000002px;width:54px;height:10.3px;background:#b8bcd0;border:1px solid #8088a0;"></div>
<svg style="position:absolute;left:54.5px;top:67.60000000000002px" width="8" height="8"><rect x="0.5" y="0.5" width="7" height="7" fill="#a02048" stroke="#501040" stroke-width="1"/><rect x="1.5" y="1.5" width="3" height="2.5" fill="#f0c0d0"/><rect x="1" y="4.5" width="3" height="2.5" fill="#208040"/><rect x="4.5" y="3" width="2.5" height="4" fill="#c02030"/></svg>
<div style="position:absolute;left:67.01px;top:67.76px;font-size:8.4px;line-height:8.4px;color:#000;font-weight:normal;white-space:pre;transform:scaleX(0.8586);transform-origin:0 0;">a_bluetex1a_02</div>
<svg style="position:absolute;left:45px;top:82.44999999999999px" width="10" height="1.0"><path d="M0 0H9" stroke="#b8b8b8" stroke-width="1" stroke-dasharray="1 1" transform="translate(0.5,0.5)"/></svg>
<svg style="position:absolute;left:54.5px;top:78.44999999999999px" width="8" height="8"><rect x="0.5" y="0.5" width="7" height="7" fill="#a02048" stroke="#501040" stroke-width="1"/><rect x="1.5" y="1.5" width="3" height="2.5" fill="#f0c0d0"/><rect x="1" y="4.5" width="3" height="2.5" fill="#6020a0"/><rect x="4.5" y="3" width="2.5" height="4" fill="#c02030"/></svg>
<div style="position:absolute;left:67.02px;top:78.61px;font-size:8.4px;line-height:8.4px;color:#000;font-weight:normal;white-space:pre;transform:scaleX(0.8389);transform-origin:0 0;">a_coldstairs_01_fin</div>
</div>
<div style="position:absolute;left:280px;top:259.5px;width:11px;height:85px;background:#f4f4f8;"></div>
<div style="position:absolute;left:280px;top:259.5px;width:11px;height:10px;background:linear-gradient(#fbfbfd,#e4e4ec);border:1px solid #b8b8c4;border-radius:1px;"></div>
<svg style="position:absolute;left:280px;top:259.5px" width="11" height="10"><path d="M3 6l2.5-2.5L8 6" stroke="#101018" stroke-width="1.6" fill="none"/></svg>
<div style="position:absolute;left:280px;top:270.5px;width:11px;height:7px;background:linear-gradient(90deg,#e8e8f0,#f8f8fc);border:1px solid #b8b8c4;border-radius:1px;"></div>
<div style="position:absolute;left:280px;top:331.5px;width:11px;height:11px;background:linear-gradient(#fbfbfd,#e4e4ec);border:1px solid #b8b8c4;border-radius:1px;"></div>
<svg style="position:absolute;left:280px;top:331.5px" width="11" height="11"><path d="M3 4.5l2.5 2.5L8 4.5" stroke="#101018" stroke-width="1.6" fill="none"/></svg>
<div style="position:absolute;left:7px;top:345px;width:284px;height:2.5px;background:#f4f4f8;"></div>
<div style="position:absolute;left:7px;top:347.5px;width:283.8px;height:85px;background:#000000;"></div>
<svg style="position:absolute;left:93.6px;top:348.8px" width="111.1" height="82.7" viewBox="93.6 348.8 111.1 82.7">
<defs><filter id="tb" x="-5%" y="-5%" width="110%" height="110%"><feGaussianBlur stdDeviation="0.5"/></filter>
<filter id="grainD" x="0" y="0" width="100%" height="100%"><feTurbulence type="fractalNoise" baseFrequency="0.45" numOctaves="2" seed="5"/><feColorMatrix values="0 0 0 0 0.2  0 0 0 0 0.12  0 0 0 0 0.08  2.2 0 0 0 -1.0"/></filter>
<filter id="grainL" x="0" y="0" width="100%" height="100%"><feTurbulence type="fractalNoise" baseFrequency="0.3" numOctaves="2" seed="9"/><feColorMatrix values="0 0 0 0 0.85  0 0 0 0 0.75  0 0 0 0 0.62  0 2.2 0 0 -1.05"/></filter></defs>
<g filter="url(#tb)">
<rect x="93.6" y="348.8" width="111.1" height="82.7" fill="#8c6a58"/>
<rect x="93.6" y="348.8" width="21" height="42" fill="#9c806a"/>
<rect x="115" y="365" width="22" height="66" fill="#a4644e"/>
<rect x="117" y="348.8" width="19" height="16" fill="#98786a"/>
<rect x="136" y="348.8" width="35" height="30" fill="#9a7c68"/>
<rect x="175" y="348.8" width="30" height="38" fill="#a49482"/>
<rect x="93.6" y="391" width="22" height="40" fill="#946e5a"/>
<rect x="141" y="391" width="12" height="40" fill="#a06a56"/>
<rect x="152" y="391" width="46" height="40" fill="#a28470"/>
<rect x="118" y="397" width="22" height="20" fill="#9a7462"/>
<rect x="152" y="357" width="17" height="26" fill="#a88a74"/>
<rect x="104" y="392" width="13" height="28" fill="#8e6856"/>
<rect x="93.6" y="348.8" width="111.1" height="82.7" filter="url(#grainD)" opacity="0.6"/>
<rect x="93.6" y="348.8" width="111.1" height="82.7" filter="url(#grainL)" opacity="0.3"/>
<path d="M115 348.8V431.5M117 365L136 357V348.8M152.5 348.8V384H175M152.5 357H169M172 348.8V431.5M175.5 348.8V431.5M175 386.3H204.7M128.6 377H152.5M128.6 377V391M130.4 390.8H204.7M104.2 391.7H117.3V420.8H104.2ZM130.4 390.8V397.4H140.7V431.5M96 424.5H150M152.2 391V431.5M198.6 391V431.5M93.6 349.5H204.7M204 348.8V431.5" stroke="#3a2616" stroke-width="1.7" fill="none"/>
<path d="M171.4 394.6H193V408.6H171.4Z" fill="#5a4434" stroke="#301c0c" stroke-width="1.7"/>
<path d="M176 398h12v7h-12z" fill="#8a745e"/>
<rect x="112" y="349" width="8" height="6" fill="#3a2a26"/>
<rect x="95" y="380" width="12" height="5" fill="#6a5040" stroke="#3a2818" stroke-width="1.2"/>
<rect x="195.6" y="380" width="7" height="5" fill="#2a1c14"/>
<rect x="156" y="369" width="5" height="8" fill="#747458"/>
<rect x="153" y="393" width="12" height="15" fill="#8c8474" opacity="0.7"/>
<path d="M120 428h20" stroke="#b04030" stroke-width="1.5" opacity="0.6"/>
</g>
</svg>
<div style="position:absolute;left:7px;top:432.5px;width:285px;height:20px;background:#e8e8f0;"></div>
<div style="position:absolute;left:8px;top:433px;width:28px;height:14px;background:#ececf2;border-right:1px solid #808088;border-bottom:1px solid #808088;border-left:1px solid #fafafa;border-top:1px solid #fafafa;"></div>
<div style="position:absolute;left:11.38px;top:437.23px;font-size:8.6px;line-height:8.6px;color:#000;font-weight:normal;white-space:pre;transform:scaleX(0.9033);transform-origin:0 0;">Entity</div>
<div style="position:absolute;left:66.7px;top:433px;width:35.3px;height:14px;background:#ececf2;border-right:1px solid #808088;border-bottom:1px solid #808088;border-left:1px solid #fafafa;border-top:1px solid #fafafa;"></div>
<div style="position:absolute;left:69.65px;top:437.23px;font-size:8.6px;line-height:8.6px;color:#8c98cc;font-weight:normal;white-space:pre;transform:scaleX(0.8803);transform-origin:0 0;">Textures</div>
<div style="position:absolute;left:103.7px;top:433px;width:32.8px;height:14px;background:#ececf2;border-right:1px solid #808088;border-bottom:1px solid #808088;border-left:1px solid #fafafa;border-top:1px solid #fafafa;"></div>
<div style="position:absolute;left:106.54px;top:437.23px;font-size:8.6px;line-height:8.6px;color:#000;font-weight:normal;white-space:pre;transform:scaleX(0.8315);transform-origin:0 0;">Console</div>
<div style="position:absolute;left:137.5px;top:433px;width:30.5px;height:14px;background:#ececf2;border-right:1px solid #808088;border-bottom:1px solid #808088;border-left:1px solid #fafafa;border-top:1px solid #fafafa;"></div>
<div style="position:absolute;left:140.24px;top:437.23px;font-size:8.6px;line-height:8.6px;color:#000;font-weight:normal;white-space:pre;transform:scaleX(0.8443);transform-origin:0 0;">Groups</div>
<div style="position:absolute;left:37px;top:433px;width:29px;height:15px;background:#f4f4f8;border-right:1px solid #606068;border-bottom:1px solid #606068;border-left:1px solid #fafafa;"></div>
<div style="position:absolute;left:40.02px;top:438.63px;font-size:8.6px;line-height:8.6px;color:#000;font-weight:normal;white-space:pre;transform:scaleX(0.8381);transform-origin:0 0;">Media</div>
<div style="position:absolute;left:3px;top:451px;width:294px;height:1px;background:#c8c8d4;"></div>
<div style="position:absolute;left:295px;top:238px;width:1px;height:215px;background:#84848c;"></div>
<div style="position:absolute;left:7px;top:452px;width:289px;height:1px;background:#6c6c74;"></div>
<div style="position:absolute;left:299px;top:53px;width:33px;height:400px;background:#f0f0f6;border:1px solid #c4c4d0;border-radius:5px 5px 0 0;"></div>
<div style="position:absolute;left:300px;top:54px;width:31px;height:14.5px;background:linear-gradient(#ffffff,#e6e6f0);border-radius:4px 4px 0 0;"></div>
<div style="position:absolute;left:303.78px;top:56.97px;font-size:9.6px;line-height:9.6px;color:#8e8e96;font-weight:bold;white-space:pre;transform:scaleX(0.9301);transform-origin:0 0;">Z</div>
<div style="position:absolute;left:300px;top:68.5px;width:31px;height:384px;background:#e8e8f0;"></div>
<div style="position:absolute;left:301.5px;top:69px;width:28px;height:382px;background:#ffffff;"></div>
<svg style="position:absolute;left:301.5px;top:69px" width="28.0" height="382"><path d="M0.5 1.70H27.5M0.5 12.58H27.5M0.5 18.02H27.5M0.5 23.46H27.5M0.5 28.90H27.5M0.5 34.34H27.5M0.5 39.78H27.5M0.5 45.22H27.5M0.5 56.10H27.5M0.5 61.54H27.5M0.5 66.98H27.5M0.5 72.42H27.5M0.5 77.86H27.5M0.5 83.30H27.5M0.5 88.74H27.5M0.5 99.62H27.5M0.5 105.06H27.5M0.5 110.50H27.5M0.5 115.94H27.5M0.5 121.38H27.5M0.5 126.82H27.5M0.5 132.26H27.5M0.5 143.14H27.5M0.5 148.58H27.5M0.5 154.02H27.5M0.5 159.46H27.5M0.5 164.90H27.5M0.5 170.34H27.5M0.5 175.78H27.5M0.5 186.66H27.5M0.5 192.10H27.5M0.5 197.54H27.5M0.5 202.98H27.5M0.5 208.42H27.5M0.5 213.86H27.5M0.5 219.30H27.5M0.5 230.18H27.5M0.5 235.62H27.5M0.5 241.06H27.5M0.5 246.50H27.5M0.5 251.94H27.5M0.5 257.38H27.5M0.5 262.82H27.5M0.5 273.70H27.5M0.5 279.14H27.5M0.5 284.58H27.5M0.5 290.02H27.5M0.5 295.46H27.5M0.5 300.90H27.5M0.5 306.34H27.5M0.5 317.22H27.5M0.5 322.66H27.5M0.5 328.10H27.5M0.5 333.54H27.5M0.5 338.98H27.5M0.5 344.42H27.5M0.5 349.86H27.5M0.5 360.74H27.5M0.5 366.18H27.5M0.5 371.62H27.5M0.5 377.06H27.5" stroke="#c4c4c4" stroke-width="1" fill="none"/><path d="M0.5 7.14H27.5M0.5 50.66H27.5M0.5 94.18H27.5M0.5 137.70H27.5M0.5 181.22H27.5M0.5 224.74H27.5M0.5 268.26H27.5M0.5 311.78H27.5M0.5 355.30H27.5" stroke="#686868" stroke-width="1" fill="none"/><path d="M13.2 7.5V382" stroke="#808080" stroke-width="1" fill="none"/><g transform="translate(-301.5,-69)"><path d="M308.2 136.5H321.9L315.1 156.6Z" fill="none" stroke="#c040d0" stroke-width="1"/><path d="M309.5 157H322V163.4" fill="none" stroke="#c040d0" stroke-width="1"/><path d="M314.7 218L321.5 224V250.7H308.3V224Z M308.3 224L314.7 228.8L321.5 224" fill="none" stroke="#3a3ad8" stroke-width="1.2"/><rect x="306.5" y="251" width="17" height="5" fill="#401838" stroke="#c02090" stroke-width="1"/><path d="M314.7 256L322.3 277H308Z" fill="none" stroke="#c040d0" stroke-width="1"/></g></svg>
<div style="position:absolute;left:301.63px;top:69.64px;font-size:8.2px;line-height:8.2px;color:#000;font-weight:normal;white-space:pre;transform:scaleX(1.0893);transform-origin:0 0;-webkit-text-stroke:0.15px #000;background:#fff;">192</div>
<div style="position:absolute;left:301.63px;top:113.16px;font-size:8.2px;line-height:8.2px;color:#000;font-weight:normal;white-space:pre;transform:scaleX(1.0858);transform-origin:0 0;-webkit-text-stroke:0.15px #000;background:#fff;">128</div>
<div style="position:absolute;left:301.86px;top:156.68px;font-size:8.2px;line-height:8.2px;color:#000;font-weight:normal;white-space:pre;transform:scaleX(1.0840);transform-origin:0 0;-webkit-text-stroke:0.15px #000;background:#fff;">64</div>
<div style="position:absolute;left:301.97px;top:200.20px;font-size:8.2px;line-height:8.2px;color:#000;font-weight:normal;white-space:pre;transform:scaleX(1.1567);transform-origin:0 0;-webkit-text-stroke:0.15px #000;background:#fff;">0</div>
<div style="position:absolute;left:302.30px;top:243.72px;font-size:8.2px;line-height:8.2px;color:#000;font-weight:normal;white-space:pre;-webkit-text-stroke:0.15px #000;">–64</div>
<div style="position:absolute;left:302.30px;top:287.24px;font-size:8.2px;line-height:8.2px;color:#000;font-weight:normal;white-space:pre;-webkit-text-stroke:0.15px #000;background:#fff;">–128</div>
<div style="position:absolute;left:302.30px;top:330.76px;font-size:8.2px;line-height:8.2px;color:#000;font-weight:normal;white-space:pre;transform:scaleX(1.0069);transform-origin:0 0;-webkit-text-stroke:0.15px #000;background:#fff;">–192</div>
<div style="position:absolute;left:302.30px;top:374.28px;font-size:8.2px;line-height:8.2px;color:#000;font-weight:normal;white-space:pre;-webkit-text-stroke:0.15px #000;background:#fff;">–256</div>
<div style="position:absolute;left:302.30px;top:417.80px;font-size:8.2px;line-height:8.2px;color:#000;font-weight:normal;white-space:pre;-webkit-text-stroke:0.15px #000;background:#fff;">–320</div>
<div style="position:absolute;left:329.5px;top:53px;width:2.5px;height:400px;background:#ececf2;"></div>
<div style="position:absolute;left:330px;top:54px;width:1px;height:399px;background:#d0d0da;"></div>
<div style="position:absolute;left:331px;top:53px;width:308px;height:400px;background:#f0f0f6;border:1px solid #c4c4d0;border-radius:5px 5px 0 0;"></div>
<div style="position:absolute;left:332px;top:54px;width:306px;height:15px;background:linear-gradient(#ffffff,#e6e6f0);border-radius:4px 4px 0 0;"></div>
<div style="position:absolute;left:336.95px;top:57.47px;font-size:9.6px;line-height:9.6px;color:#8e8e96;font-weight:bold;white-space:pre;transform:scaleX(0.9455);transform-origin:0 0;">XY Top</div>
<div style="position:absolute;left:332px;top:69px;width:304px;height:384px;background:#e8e8f0;"></div>
<div style="position:absolute;left:334px;top:70px;width:301.5px;height:382px;overflow:hidden;background:#fff;">
<svg style="position:absolute;left:0;top:0" width="301.5" height="382"><path d="M0.45 0V382M5.90 0V382M11.35 0V382M16.80 0V382M22.25 0V382M33.15 0V382M38.60 0V382M44.05 0V382M49.50 0V382M54.95 0V382M60.40 0V382M65.85 0V382M76.75 0V382M82.20 0V382M87.65 0V382M93.10 0V382M98.55 0V382M104.00 0V382M109.45 0V382M120.35 0V382M125.80 0V382M131.25 0V382M136.70 0V382M142.15 0V382M147.60 0V382M153.05 0V382M163.95 0V382M169.40 0V382M174.85 0V382M180.30 0V382M185.75 0V382M191.20 0V382M196.65 0V382M207.55 0V382M213.00 0V382M218.45 0V382M223.90 0V382M229.35 0V382M234.80 0V382M240.25 0V382M251.15 0V382M256.60 0V382M262.05 0V382M267.50 0V382M272.95 0V382M278.40 0V382M283.85 0V382M294.75 0V382M300.20 0V382M0 0.04H301.5M0 5.47H301.5M0 10.91H301.5M0 16.34H301.5M0 21.78H301.5M0 27.21H301.5M0 32.65H301.5M0 43.52H301.5M0 48.95H301.5M0 54.39H301.5M0 59.82H301.5M0 65.26H301.5M0 70.69H301.5M0 76.12H301.5M0 87.00H301.5M0 92.43H301.5M0 97.87H301.5M0 103.30H301.5M0 108.74H301.5M0 114.17H301.5M0 119.61H301.5M0 130.48H301.5M0 135.91H301.5M0 141.34H301.5M0 146.78H301.5M0 152.22H301.5M0 157.65H301.5M0 163.09H301.5M0 173.96H301.5M0 179.39H301.5M0 184.82H301.5M0 190.26H301.5M0 195.69H301.5M0 201.13H301.5M0 206.56H301.5M0 217.44H301.5M0 222.87H301.5M0 228.31H301.5M0 233.74H301.5M0 239.18H301.5M0 244.61H301.5M0 250.05H301.5M0 260.92H301.5M0 266.35H301.5M0 271.78H301.5M0 277.22H301.5M0 282.65H301.5M0 288.09H301.5M0 293.52H301.5M0 304.39H301.5M0 309.83H301.5M0 315.26H301.5M0 320.70H301.5M0 326.13H301.5M0 331.57H301.5M0 337.00H301.5M0 347.88H301.5M0 353.31H301.5M0 358.75H301.5M0 364.18H301.5M0 369.62H301.5M0 375.05H301.5M0 380.49H301.5" stroke="#b8b8b8" stroke-width="1" fill="none"/><path d="M0 38.08H301.5M0 81.56H301.5M0 125.04H301.5M0 168.52H301.5M0 212.00H301.5M0 255.48H301.5M0 298.96H301.5M0 342.44H301.5" stroke="#747474" stroke-width="1" fill="none"/><path d="M27.70 0V382M71.30 0V382M114.90 0V382M158.50 0V382M202.10 0V382M245.70 0V382M289.30 0V382" stroke="#646464" stroke-width="1" fill="none"/><path d="M27.70 81.56H289.30V298.96H27.70Z" stroke="#e43c3c" stroke-width="1" fill="none"/><rect x="153.8" y="193.2" width="10.5" height="10.8" fill="#dce0ff" stroke="#3038d8" stroke-width="1.3"/><path d="M156.3 196h5.5l-5.5 5.5h5.5" stroke="#2028c0" stroke-width="1.3" fill="none"/></svg>
<div style="position:absolute;left:29.30px;top:-0.37px;font-size:8.6px;line-height:8.6px;color:#000;font-weight:normal;white-space:pre;transform:scaleX(0.9601);transform-origin:0 0;-webkit-text-stroke:0.15px #000;background:#fff;">–192</div>
<div style="position:absolute;left:72.80px;top:-0.37px;font-size:8.6px;line-height:8.6px;color:#000;font-weight:normal;white-space:pre;transform:scaleX(0.9579);transform-origin:0 0;-webkit-text-stroke:0.15px #000;background:#fff;">–128</div>
<div style="position:absolute;left:116.40px;top:-0.37px;font-size:8.6px;line-height:8.6px;color:#000;font-weight:normal;white-space:pre;transform:scaleX(0.9501);transform-origin:0 0;-webkit-text-stroke:0.15px #000;background:#fff;">–64</div>
<div style="position:absolute;left:157.97px;top:-0.37px;font-size:8.6px;line-height:8.6px;color:#000;font-weight:normal;white-space:pre;transform:scaleX(1.1029);transform-origin:0 0;-webkit-text-stroke:0.15px #000;background:#fff;">0</div>
<div style="position:absolute;left:202.56px;top:-0.37px;font-size:8.6px;line-height:8.6px;color:#000;font-weight:normal;white-space:pre;transform:scaleX(1.0336);transform-origin:0 0;-webkit-text-stroke:0.15px #000;background:#fff;">64</div>
<div style="position:absolute;left:245.93px;top:-0.37px;font-size:8.6px;line-height:8.6px;color:#000;font-weight:normal;white-space:pre;transform:scaleX(1.0353);transform-origin:0 0;-webkit-text-stroke:0.15px #000;background:#fff;">128</div>
<div style="position:absolute;left:289.53px;top:-0.37px;font-size:8.6px;line-height:8.6px;color:#000;font-weight:normal;white-space:pre;transform:scaleX(1.0386);transform-origin:0 0;-webkit-text-stroke:0.15px #000;background:#fff;">192</div>
<div style="position:absolute;left:1.56px;top:31.46px;font-size:8.6px;line-height:8.6px;color:#000;font-weight:normal;white-space:pre;transform:scaleX(1.0188);transform-origin:0 0;-webkit-text-stroke:0.15px #000;background:#fff;">256</div>
<div style="position:absolute;left:1.33px;top:74.94px;font-size:8.6px;line-height:8.6px;color:#000;font-weight:normal;white-space:pre;transform:scaleX(1.0386);transform-origin:0 0;-webkit-text-stroke:0.15px #000;background:#fff;">192</div>
<div style="position:absolute;left:1.33px;top:118.42px;font-size:8.6px;line-height:8.6px;color:#000;font-weight:normal;white-space:pre;transform:scaleX(1.0353);transform-origin:0 0;-webkit-text-stroke:0.15px #000;background:#fff;">128</div>
<div style="position:absolute;left:1.56px;top:161.90px;font-size:8.6px;line-height:8.6px;color:#000;font-weight:normal;white-space:pre;transform:scaleX(1.0336);transform-origin:0 0;-webkit-text-stroke:0.15px #000;background:#fff;">64</div>
<div style="position:absolute;left:1.67px;top:205.38px;font-size:8.6px;line-height:8.6px;color:#000;font-weight:normal;white-space:pre;transform:scaleX(1.1029);transform-origin:0 0;-webkit-text-stroke:0.15px #000;background:#fff;">0</div>
<div style="position:absolute;left:2.00px;top:248.86px;font-size:8.6px;line-height:8.6px;color:#000;font-weight:normal;white-space:pre;transform:scaleX(0.9501);transform-origin:0 0;-webkit-text-stroke:0.15px #000;background:#fff;">–64</div>
<div style="position:absolute;left:2.00px;top:292.34px;font-size:8.6px;line-height:8.6px;color:#000;font-weight:normal;white-space:pre;transform:scaleX(0.9579);transform-origin:0 0;-webkit-text-stroke:0.15px #000;background:#fff;">–128</div>
<div style="position:absolute;left:2.00px;top:335.82px;font-size:8.6px;line-height:8.6px;color:#000;font-weight:normal;white-space:pre;transform:scaleX(0.9601);transform-origin:0 0;-webkit-text-stroke:0.15px #000;background:#fff;">–192</div>
<div style="position:absolute;left:24.57px;top:6.53px;font-size:8.6px;line-height:8.6px;color:#7048c0;font-weight:normal;white-space:pre;transform:scaleX(0.7752);transform-origin:0 0;-webkit-text-stroke:0.15px #7048c0;">XY</div>
<div style="position:absolute;left:38.31px;top:6.53px;font-size:8.6px;line-height:8.6px;color:#7048c0;font-weight:normal;white-space:pre;transform:scaleX(1.0803);transform-origin:0 0;-webkit-text-stroke:0.15px #7048c0;">Top</div>
</div>
<div style="position:absolute;left:636px;top:53px;width:4px;height:400px;background:#f0f0f6;"></div>
<div style="position:absolute;left:638px;top:54px;width:1px;height:399px;background:#c4c4d0;"></div>
<div style="position:absolute;left:0px;top:453px;width:640px;height:17px;background:#e2e2ea;"></div>
<div style="position:absolute;left:0px;top:453.5px;width:640px;height:1.5px;background:#f4f4f8;"></div>
<div style="position:absolute;left:101.9px;top:455.8px;width:99.6px;height:14.2px;background:#e8e8ee;border-top:1px solid #a8a8b2;border-left:1px solid #a8a8b2;"></div>
<div style="position:absolute;left:203.3px;top:455.8px;width:99.69999999999999px;height:14.2px;background:#e8e8ee;border-top:1px solid #a8a8b2;border-left:1px solid #a8a8b2;"></div>
<div style="position:absolute;left:303.4px;top:455.8px;width:251.60000000000002px;height:14.2px;background:#e8e8ee;border-top:1px solid #a8a8b2;border-left:1px solid #a8a8b2;"></div>
<div style="position:absolute;left:556.4px;top:455.8px;width:83.60000000000002px;height:14.2px;background:#e8e8ee;border-top:1px solid #a8a8b2;border-left:1px solid #a8a8b2;"></div>
<div style="position:absolute;left:103.74px;top:457.17px;font-size:9.6px;line-height:9.6px;color:#000;font-weight:normal;white-space:pre;transform:scaleX(0.9144);transform-origin:0 0;">Z:: -336.0</div>
<div style="position:absolute;left:204.60px;top:457.17px;font-size:9.6px;line-height:9.6px;color:#000;font-weight:normal;white-space:pre;transform:scaleX(0.9225);transform-origin:0 0;">Origin X:: -192.0  Y:: 192</div>
<div style="position:absolute;left:304.87px;top:457.17px;font-size:9.6px;line-height:9.6px;color:#000;font-weight:normal;white-space:pre;transform:scaleX(0.9188);transform-origin:0 0;">textures/base_floor/a_bluetex1a_02 (&lt;none&gt;) W: 256 H: 256</div>
<div style="position:absolute;left:559.06px;top:457.17px;font-size:9.6px;line-height:9.6px;color:#000;font-weight:normal;white-space:pre;transform:scaleX(0.9166);transform-origin:0 0;">G:8.00 T:1.00 R:45</div>
<div style="position:absolute;left:637.02px;top:457.17px;font-size:9.6px;line-height:9.6px;color:#000;font-weight:normal;white-space:pre;">C</div>
<svg style="position:absolute;left:326px;top:49px" width="8" height="8"><path d="M2.5 2.2L5.8 4.8L5.2 5.8z" fill="#101010" stroke="#101010" stroke-width="1.3" stroke-linejoin="round"/></svg>
<div style="position:absolute;left:334px;top:69.5px;width:301.5px;height:1px;background:#c8c8d0;"></div>
<div style="position:absolute;left:635.5px;top:69.5px;width:1px;height:383px;background:#b8b8c0;"></div>
<svg style="position:absolute;left:334px;top:357px" width="5" height="5"><path d="M0.5 1.5L3 2.5L3.5 4" stroke="#303030" stroke-width="1" fill="none"/></svg>
<div style="position:absolute;left:334px;top:452px;width:302px;height:1px;background:#d4d4dc;"></div>
<div style="position:absolute;left:0px;top:453px;width:1px;height:17px;background:#8c8c94;"></div>
<div style="position:absolute;left:3.5px;top:452px;width:292px;height:1px;background:#8c8c96;"></div>
</body></html>
